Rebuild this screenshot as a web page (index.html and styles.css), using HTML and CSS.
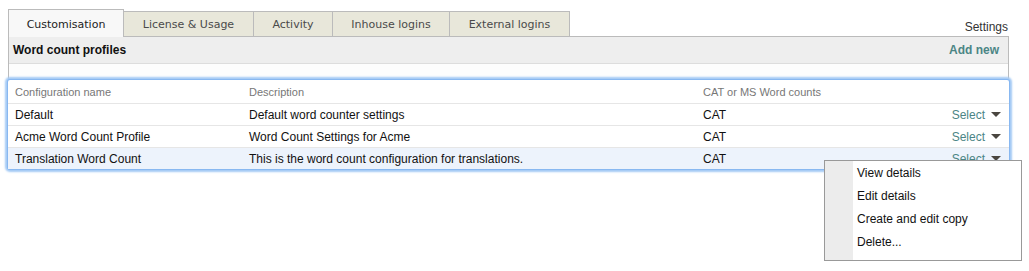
FILE: index.html
```html
<!DOCTYPE html>
<html>
<head>
<meta charset="utf-8">
<link rel="stylesheet" href="styles.css">
</head>
<body>
<div class="page">
  <div class="topbar">
    <div class="tabs">
      <div class="tab active w1">Customisation</div>
      <div class="tab w2">License &amp; Usage</div>
      <div class="tab w3">Activity</div>
      <div class="tab w4">Inhouse logins</div>
      <div class="tab w5">External logins</div>
    </div>
    <div class="settings">Settings</div>
  </div>
  <div class="panel">
    <div class="panel-head">
      <span class="title">Word count profiles</span>
      <span class="addnew">Add new</span>
    </div>
    <div class="spacer"></div>
    <div class="grid">
      <div class="row head">
        <div class="c1">Configuration name</div>
        <div class="c2">Description</div>
        <div class="c3">CAT or MS Word counts</div>
        <div class="c4"></div>
      </div>
      <div class="row">
        <div class="c1">Default</div>
        <div class="c2">Default word counter settings</div>
        <div class="c3">CAT</div>
        <div class="c4"><span class="sel">Select</span><span class="caret"></span></div>
      </div>
      <div class="row">
        <div class="c1">Acme Word Count Profile</div>
        <div class="c2">Word Count Settings for Acme</div>
        <div class="c3">CAT</div>
        <div class="c4"><span class="sel">Select</span><span class="caret"></span></div>
      </div>
      <div class="row hl">
        <div class="c1">Translation Word Count</div>
        <div class="c2">This is the word count configuration for translations.</div>
        <div class="c3">CAT</div>
        <div class="c4"><span class="sel">Select</span><span class="caret"></span></div>
      </div>
    </div>
  </div>
  <div class="menu">
    <div class="item">View details</div>
    <div class="item">Edit details</div>
    <div class="item">Create and edit copy</div>
    <div class="item">Delete...</div>
  </div>
</div>
</body>
</html>
```

FILE: styles.css
```css
html, body {
  margin: 0;
  padding: 0;
  background: #fff;
}
body {
  font-family: "Liberation Sans", Arial, sans-serif;
  font-size: 12px;
  color: #111;
}
.page {
  position: relative;
  width: 1029px;
  height: 271px;
  padding: 9px 0 0 8px;
  box-sizing: border-box;
}
.topbar {
  display: flex;
  align-items: flex-end;
  justify-content: space-between;
  width: 1001px;
}
.tabs {
  display: flex;
  align-items: flex-end;
}
.tab {
  box-sizing: border-box;
  height: 25px;
  border: 1px solid #bbb;
  border-bottom: none;
  background: #e8e7da;
  margin-left: -1px;
  font-family: "DejaVu Sans", Verdana, sans-serif;
  font-size: 11px;
  color: #4a4a4a;
  text-align: center;
  line-height: 25px;
}
.tab.active {
  height: 28px;
  margin-left: 0;
  margin-bottom: -1px;
  background: #f8f8f8;
  color: #222;
  line-height: 29px;
  position: relative;
  z-index: 1;
}
.w1 { width: 116px; }
.w2 { width: 131px; }
.w3 { width: 80px; }
.w4 { width: 118px; }
.w5 { width: 121px; }
.settings {
  font-size: 12px;
  color: #333;
  margin-bottom: 2px;
  padding-right: 1px;
}
.panel {
  width: 1001px;
  box-sizing: border-box;
  border: 1px solid #bbb;
  border-bottom: none;
}
.panel-head {
  display: flex;
  justify-content: space-between;
  align-items: center;
  height: 26px;
  background: #eee;
  border-bottom: 1px solid #ddd;
  padding: 0 9px 0 4px;
}
.title {
  font-weight: bold;
  color: #111;
}
.addnew {
  font-weight: bold;
  color: #4b8585;
}
.spacer {
  height: 16px;
  background: #fdfdfd;
}
.grid {
  margin: 0 -1px;
  position: relative;
  background: #fff;
  border-radius: 2px;
  box-shadow: 0 0 0 1px #88b8f1, 0 0 2px 3px #a4caf5;
}
.row {
  display: grid;
  grid-template-columns: 234px 454px 1fr auto;
  box-sizing: border-box;
  height: 22px;
  align-items: center;
  border-top: 1px solid #e6e6e6;
  padding-left: 7px;
  padding-right: 8px;
}
.row.head {
  height: 23px;
  border-top: none;
  color: #777;
  font-size: 11px;
  padding-top: 1px;
}
.row.hl {
  background: #edf3fc;
}
.c4 {
  display: flex;
  align-items: center;
}
.sel {
  color: #4b8585;
}
.caret {
  width: 0;
  height: 0;
  margin-left: 6px;
  border-left: 5px solid transparent;
  border-right: 5px solid transparent;
  border-top: 5px solid #4a4640;
}
.menu {
  position: absolute;
  left: 824px;
  top: 160px;
  width: 198px;
  height: 101px;
  box-sizing: border-box;
  border: 1px solid #999;
  background: linear-gradient(to right, #ececec 0, #ececec 28px, #fff 28px);
  padding-top: 1px;
  z-index: 5;
}
.item {
  height: 23px;
  line-height: 23px;
  padding-left: 32px;
  color: #111;
}
```
